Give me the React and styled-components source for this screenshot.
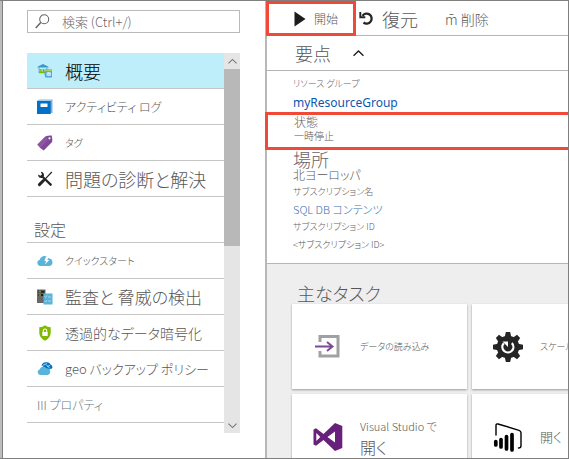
import React from "react";
import styled, { createGlobalStyle } from "styled-components";

const GlobalStyle = createGlobalStyle`
  * { box-sizing: border-box; }
  body {
    margin: 0;
    background: #fff;
    color: #575757;
    font-family: "Noto Sans CJK JP", "Liberation Sans", sans-serif;
    font-weight: 300;
    font-feature-settings: "palt";
  }
  button, input { font: inherit; color: inherit; font-feature-settings: inherit; }
  ul, dl, dd, h2, h3 { margin: 0; padding: 0; font-weight: inherit; }
  ul { list-style: none; }
  a { color: inherit; text-decoration: none; }
  svg { display: block; flex: none; }
`;

const Frame = styled.div`
  display: flex;
  height: 100vh;
  overflow: hidden;
  border: 1px solid #7f7f7f;
  border-left: 0;
`;

const Edge = styled.div`
  flex: none;
  width: 3px;
  background: #bdbdbd;
  border-right: 1px solid #7f7f7f;
`;

const Sidebar = styled.aside`
  flex: none;
  width: 262px;
  padding: 9px 25px 0 24px;
`;

const SearchBox = styled.label`
  display: flex;
  align-items: center;
  gap: 12px;
  height: 23px;
  padding-left: 7px;
  border: 1px solid #bababa;
`;

const SearchInput = styled.input`
  flex: 1;
  min-width: 0;
  padding: 0;
  border: 0;
  outline: 0;
  background: transparent;
  font-size: 13px;
  line-height: 20px;
  &::placeholder { color: #6f676f; opacity: 1; }
`;

const NavArea = styled.div`
  display: flex;
  margin-top: 20px;
`;

const Nav = styled.nav`
  flex: 1;
  min-width: 0;
  padding-bottom: 10px;
`;

const NavLink = styled.a`
  display: flex;
  align-items: center;
  gap: 12px;
  height: 36px;
  padding-left: 10px;
  border-bottom: 1px solid #c6c6c6;
  white-space: pre;
  font-size: ${(p) => p.$size}px;
  line-height: 24px;
  color: ${(p) => (p.$active ? "#000" : p.$tint || "#575757")};
  background: ${(p) => (p.$active ? "#bdeefa" : "transparent")};
`;

const NavHeading = styled.h2`
  height: 46px;
  padding: 20px 0 0 7px;
  border-bottom: 1px solid #c6c6c6;
  font-size: 16px;
  line-height: 24px;
`;

const ScrollBar = styled.div`
  display: flex;
  flex-direction: column;
  justify-content: space-between;
  width: 16px;
  background: #e5e5e5;
`;

const ScrollButton = styled.button`
  display: grid;
  place-items: center;
  height: 16px;
  padding: 0;
  border: 0;
  background: #e5e5e5;
`;

const ScrollTrack = styled.div`
  flex: 1;
`;

const ScrollThumb = styled.div`
  height: 51%;
  background: #b8b8b8;
`;

const Main = styled.main`
  flex: 1;
  min-width: 0;
  display: flex;
  flex-direction: column;
  border-left: 2px solid #b8b8b8;
`;

const Toolbar = styled.div`
  display: flex;
  flex: none;
  height: 35px;
  border-bottom: 1px solid #b5b5b5;
`;

const ToolButton = styled.button`
  display: flex;
  align-items: center;
  gap: 8px;
  height: 35px;
  padding: 0 0 0 ${(p) => p.$inset}px;
  border: 0;
  background: transparent;
  font-size: ${(p) => p.$size}px;
  line-height: 28px;
  white-space: nowrap;
`;

const StartButton = styled(ToolButton)`
  width: 90px;
  margin-left: -1px;
  border: 3px solid #f04937;
`;

const EssentialsBar = styled.div`
  display: flex;
  flex: none;
  align-items: center;
  gap: 22px;
  height: 35px;
  padding-left: 28px;
  border-bottom: 1px solid #b5b5b5;
`;

const Title = styled.h2`
  font-size: 18px;
  line-height: 22px;
`;

const ToggleButton = styled.button`
  padding: 0;
  border: 0;
  background: transparent;
`;

const Properties = styled.dl`
  flex: none;
  padding: 3px 0 11px;
  border-bottom: 1px solid #b5b5b5;
`;

const Property = styled.div`
  padding-left: 26px;
  white-space: nowrap;
`;

const StatusProperty = styled(Property)`
  margin-left: -2px;
  margin-right: -4px;
  padding-bottom: 4px;
  border: 3px solid #f04937;
`;

const Label = styled.dt`
  font-size: ${(p) => p.$size}px;
  line-height: ${(p) => p.$line}px;
  color: #68626a;
`;

const Value = styled.dd`
  font-size: ${(p) => p.$size}px;
  line-height: ${(p) => p.$line}px;
`;

const ResourceLink = styled.a`
  display: block;
  color: #0b57b0;
  font-family: "Noto Sans", sans-serif;
  font-weight: 400;
`;

const SubscriptionLink = styled.a`
  display: block;
  color: #3a6fb2;
`;

const Tasks = styled.section`
  flex: 1;
  padding: 18px 0 0 25px;
  background: #eee;
`;

const TasksTitle = styled.h3`
  padding-left: 5px;
  font-size: 18px;
  line-height: 22px;
`;

const CardGrid = styled.div`
  display: grid;
  grid-template-columns: 175px 175px;
  grid-auto-rows: 85px;
  gap: 5px;
`;

const Card = styled.button`
  display: flex;
  align-items: center;
  gap: 16px;
  padding: 0 0 0 20px;
  border: 0;
  background: #fff;
  box-shadow: 0 1px 2px #999;
  text-align: left;
  white-space: nowrap;
`;

const CardText = styled.span`
  display: flex;
  flex-direction: column;
`;

const CardLine = styled.span`
  font-size: ${(p) => p.$size}px;
  line-height: 21px;
`;

const SearchIcon = () => (
  <svg width="15" height="15" viewBox="0 0 15 15" fill="none" stroke="#666" strokeWidth="1.1">
    <circle cx="9.2" cy="5.3" r="4.5" />
    <path d="M5.8 8.6L.7 14" strokeWidth="1.5" />
  </svg>
);

const OverviewIcon = () => (
  <svg width="16" height="16" viewBox="0 0 16 16">
    <path d="M0 4.600Q1 3 3.500 2.300L6 1l2.500 1.300Q11 3 12 4.600z" fill="#3999c6" />
    <path d="M1.500 4.600H3V10H1.500zM9 4.600h1.500V7H9z" fill="#7ab8dc" />
    <path d="M3.200 6h1.500v4H3.200zM5.700 6h1.500v4H5.700zM2 8.500h6.500v1.700H2z" fill="#7fba00" />
    <path d="M7.500 6.500H15v8H8.500l-1-3z" fill="#4ba6d4" />
    <path d="M7.500 6.500H15v1.800H7.500z" fill="#a5cf4c" />
    <ellipse cx="11.800" cy="10.300" rx="2.400" ry="1.100" fill="#fff" />
    <path d="M9.400 10.300h4.800v2.300c-1 1-3.800 1-4.800 0z" fill="#b6def0" />
  </svg>
);

const BookIcon = () => (
  <svg width="16" height="16" viewBox="0 0 16 16">
    <path d="M2 .5h13.500v13.500H2z" fill="#7aaede" />
    <path d="M0 2L2 1h11.700v14H0z" fill="#0070c8" />
    <path d="M3.500 4.500h7v3.500h-7z" fill="#fff" />
    <path d="M2 .800h12v1H1z" fill="#dcebf7" />
  </svg>
);

const TagIcon = () => (
  <svg width="16" height="16" viewBox="0 0 16 16">
    <path d="M.3 9.500L8.300 1.500Q11 .2 14.700.5q1 3.500.4 6.500L6.700 15.500Q3 13.500.3 9.500z" fill="#804998" />
    <path d="M.3 9.500l8-8 3 3-7.600 8.200z" fill="#a06ab4" opacity=".4" />
    <circle cx="12.500" cy="3.300" r="1.100" fill="#fff" />
  </svg>
);

const ToolsIcon = () => (
  <svg width="16" height="16" viewBox="0 0 16 16">
    <path d="M3.800.8Q6.800 1 7 4.200L6.700 5.600 14.800 13q.5 1.800-1.500 2L5.300 7Q1.500 7.600 1 3.500l2.400 1.300L5 3.500z" fill="#242424" />
    <path d="M14.800 1L8.300 7.800" stroke="#242424" strokeWidth="1.200" />
    <path d="M6.500 9.500L2.400 13.600" stroke="#242424" strokeWidth="3" strokeLinecap="round" />
  </svg>
);

const QuickStartIcon = () => (
  <svg width="16" height="16" viewBox="0 0 16 16">
    <path d="M3.300 13a3.200 3.200 0 0 1-.5-6.300A5 5 0 0 1 12 5.500 3.800 3.800 0 0 1 12.500 13z" fill="#59b4d9" />
    <path d="M9 3.500h3L10.300 7h2L7.800 11.500 9.200 8H7.400z" fill="#fff" />
  </svg>
);

const AuditIcon = () => (
  <svg width="16" height="16" viewBox="0 0 16 16">
    <path d="M0 .5h8.500V14H0z" fill="#686868" />
    <path d="M1.500 1.800h6v2h-6zM1.500 5h5v2h-5z" fill="#222" />
    <path d="M2 2.800h2M2 6h2" stroke="#b8d432" />
    <path d="M6.500 4.500H15.500v11H6.500z" fill="#59b4d9" />
    <path d="M7.500 7.500l1 1 1.500-2M7.500 12l1 1 1.500-2M11 8h3M11 12h3" fill="none" stroke="#b9e1f3" strokeWidth=".8" />
  </svg>
);

const ShieldIcon = () => (
  <svg width="16" height="16" viewBox="0 0 16 16">
    <path d="M8 .3Q10.500 2.300 13.700 2.200V8q0 4.800-5.700 7.700Q2.300 12.800 2.300 8V2.200Q5.500 2.300 8 .3z" fill="#7fba00" />
    <path d="M5.300 7h5.400v4H5.300z" fill="#fff" />
    <path d="M6.300 7.200V5.700a1.700 1.700 0 0 1 3.400 0v1.500" fill="none" stroke="#fff" strokeWidth="1.100" />
  </svg>
);

const GeoIcon = () => (
  <svg width="16" height="16" viewBox="0 0 16 16">
    <path d="M4.500 4.500A4.500 4.500 0 0 1 10 1.300 3.800 3.800 0 0 1 13.500 3.500a3 3 0 0 1 1.500 4L11 9z" fill="#0072c6" />
    <path d="M5.500 4.500L10 2.500M10 5.500l3-1M9 3.500l4 4" stroke="#b9dcf3" strokeWidth=".9" />
    <path d="M3 14a2.900 2.900 0 0 1-.4-5.600A4 4 0 0 1 9.500 7.300 3.400 3.400 0 0 1 10.500 14z" fill="#59b4d9" />
  </svg>
);

const PlayIcon = () => (
  <svg width="12" height="16" viewBox="0 0 12 16"><path d="M.5.500L11.500 8 .5 15.500z" fill="#1c1c1c" /></svg>
);

const UndoIcon = () => (
  <svg width="15" height="15" viewBox="0 0 15 15" fill="none" stroke="#252525">
    <path d="M3.500 4.800A5 5 0 1 1 4.500 11.500" strokeWidth="2.300" />
    <path d="M1.300 1v5.300h5" strokeWidth="1.900" />
  </svg>
);

const Chevron = ({ size = 9, down, color = "#777", stroke = 1.2 }) => (
  <svg width={size} height={size} viewBox="0 0 10 10" fill="none" stroke={color} strokeWidth={stroke}>
    <path d={down ? "M.5 3L5 7.300 9.500 3" : "M.5 7L5 2.700 9.500 7"} />
  </svg>
);

const ImportIcon = () => (
  <svg width="32" height="32" viewBox="0 0 32 32" fill="none">
    <path d="M8 11V5.500h18v19.500H8V20" stroke="#a0a1a2" strokeWidth="3" />
    <path d="M3 15.500h17M15 11l5.500 4.500L15 20" stroke="#804998" strokeWidth="2" />
  </svg>
);

const GearIcon = () => (
  <svg width="32" height="32" viewBox="0 0 32 32">
    <g fill="#252525">
      <circle cx="16" cy="16" r="11.300" />
      {[0, 45, 90, 135, 180, 225, 270, 315].map((a) => (
        <path key={a} d="M12.800 6L13.800 1h4.400L19.200 6z" transform={`rotate(${a} 16 16)`} />
      ))}
    </g>
    <path d="M11.800 12.300A5.500 5.500 0 1 0 19.800 12.100" fill="none" stroke="#fff" strokeWidth="2.300" />
    <path d="M10.500 10.500h5.500v5.500z" fill="#fff" />
  </svg>
);

const StudioIcon = () => (
  <svg width="32" height="32" viewBox="0 0 32 32">
    <path fillRule="evenodd" fill="#68217a" d="M1.500 8.500L4 7.300 11.500 13 23 2l7.300 3v22L23 30 11.500 19 4 24.700 1.500 23.500zM4.300 12v8l4-4zM23 10.500L15.500 16l7.500 5.500z" />
  </svg>
);

const PowerBiIcon = () => (
  <svg width="32" height="32" viewBox="0 0 32 32" fill="none" stroke="#000" strokeLinecap="round">
    <path d="M4 14V4.500q0-2 2-1.500L27 9.300q2 .6 2 2.500v13q0 2.200-2.500 2.200" strokeWidth="1.400" />
    <path d="M3.800 20.500v3.500M9 18.500v7.500M14.500 15.500v12.500M20 13.500v15.500" strokeWidth="3.700" />
  </svg>
);

const primaryLinks = [
  { text: "概要", size: 18, Icon: OverviewIcon, active: true },
  { text: "アクティビティ ログ", size: 12, Icon: BookIcon },
  { text: "タグ", size: 10, Icon: TagIcon },
  { text: "問題の診断と解決", size: 18, Icon: ToolsIcon },
];

const settingLinks = [
  { text: "クイックスタート", size: 10, Icon: QuickStartIcon },
  { text: "監査と 脅威の検出", size: 17, Icon: AuditIcon },
  { text: "透過的なデータ暗号化", size: 14, Icon: ShieldIcon },
  { text: "geo バックアップ ポリシー", size: 13, Icon: GeoIcon },
  { text: "III プロパティ", size: 12, tint: "#66797f" },
];

const NavList = ({ links }) => (
  <ul>
    {links.map(({ text, size, Icon, active, tint }) => (
      <li key={text}>
        <NavLink href="#" $size={size} $active={active} $tint={tint} aria-current={active ? "page" : undefined}>
          {Icon && <Icon />}
          {text}
        </NavLink>
      </li>
    ))}
  </ul>
);

export default function App() {
  return (
    <>
      <GlobalStyle />
      <Frame>
        <Edge />
        <Sidebar>
          <SearchBox>
            <SearchIcon />
            <SearchInput type="text" placeholder="検索 (Ctrl+/)" aria-label="検索 (Ctrl+/)" />
          </SearchBox>
          <NavArea>
            <Nav>
              <NavList links={primaryLinks} />
              <NavHeading>設定</NavHeading>
              <NavList links={settingLinks} />
            </Nav>
            <ScrollBar>
              <ScrollButton aria-label="上へ"><Chevron /></ScrollButton>
              <ScrollTrack><ScrollThumb /></ScrollTrack>
              <ScrollButton aria-label="下へ"><Chevron down /></ScrollButton>
            </ScrollBar>
          </NavArea>
        </Sidebar>
        <Main>
          <Toolbar>
            <StartButton $inset={25} $size={12}><PlayIcon />開始</StartButton>
            <ToolButton $inset={3} $size={18}><UndoIcon />復元</ToolButton>
            <ToolButton $inset={27} $size={14}>m̄ 削除</ToolButton>
          </Toolbar>
          <EssentialsBar>
            <Title>要点</Title>
            <ToggleButton aria-label="折りたたむ"><Chevron size={11} color="#222" stroke={1.3} /></ToggleButton>
          </EssentialsBar>
          <Properties>
            <Property>
              <Label $size={9} $line={20}>リソース グループ</Label>
              <Value $size={12} $line={18}><ResourceLink href="#">myResourceGroup</ResourceLink></Value>
            </Property>
            <StatusProperty>
              <Label $size={12} $line={14}>状態</Label>
              <Value $size={10} $line={14}>一時停止</Value>
            </StatusProperty>
            <Property>
              <Label $size={18} $line={18}>場所</Label>
              <Value $size={12} $line={14}>北ヨーロッパ</Value>
            </Property>
            <Property>
              <Label $size={9} $line={20}>サブスクリプション名</Label>
              <Value $size={11} $line={14}><SubscriptionLink href="#">SQL DB コンテンツ</SubscriptionLink></Value>
            </Property>
            <Property>
              <Label $size={9} $line={22}>サブスクリプション ID</Label>
              <Value $size={9} $line={14}>&lt;サブスクリプション ID&gt;</Value>
            </Property>
          </Properties>
          <Tasks>
            <TasksTitle>主なタスク</TasksTitle>
            <CardGrid>
              <Card>
                <ImportIcon />
                <CardText><CardLine $size={9}>データの読み込み</CardLine></CardText>
              </Card>
              <Card>
                <GearIcon />
                <CardText><CardLine $size={9}>スケール</CardLine></CardText>
              </Card>
              <Card>
                <StudioIcon />
                <CardText>
                  <CardLine $size={11}>Visual Studio で</CardLine>
                  <CardLine $size={16}>開く</CardLine>
                </CardText>
              </Card>
              <Card>
                <PowerBiIcon />
                <CardText><CardLine $size={13}>開く</CardLine></CardText>
              </Card>
            </CardGrid>
          </Tasks>
        </Main>
      </Frame>
    </>
  );
}
